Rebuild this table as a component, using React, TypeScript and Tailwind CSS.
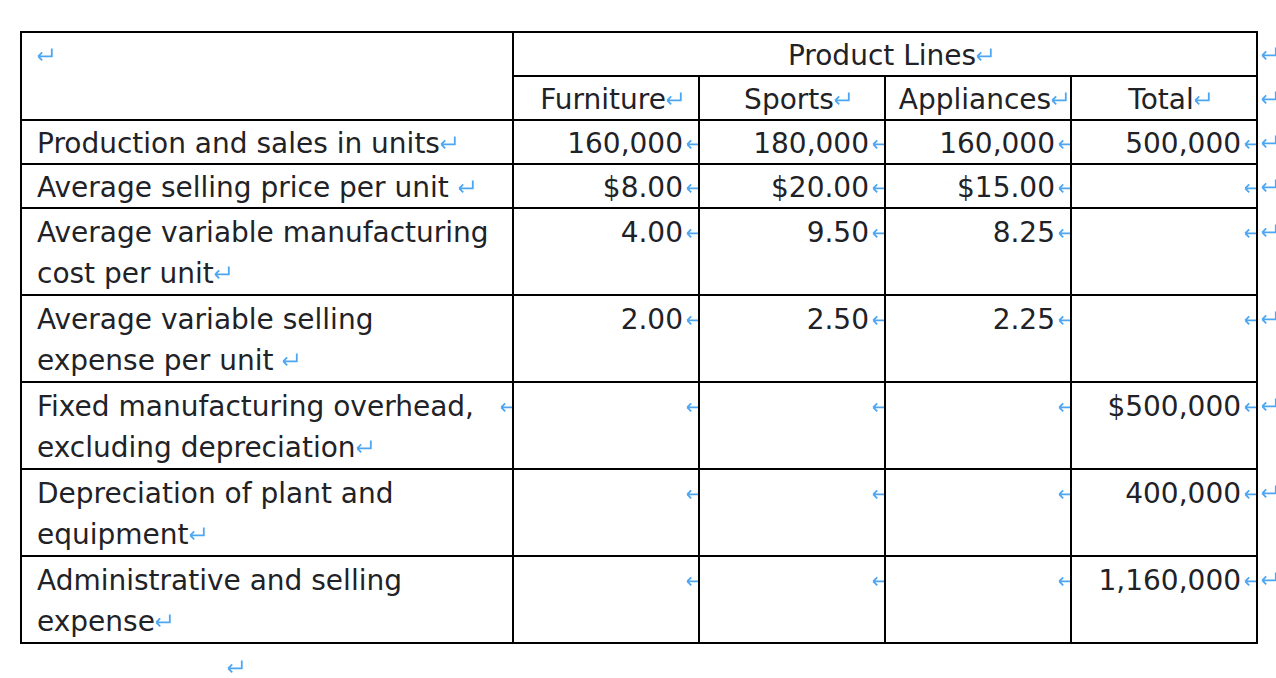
import type { ReactNode } from 'react';

// paragraph / end-of-cell marker as shown by a word processor
function Mark({ clip = false, className = '' }: { clip?: boolean; className?: string }) {
  const svg = (
    <svg width="16" height="20" viewBox="0 0 16 20" className="block" aria-hidden>
      <path
        d="M1.2 11.4 H14.8 V3.6 M1.2 11.4 L5.2 7.4 M1.2 11.4 L5.2 15.4"
        fill="none"
        stroke="#4ea6f2"
        strokeWidth="1.8"
      />
    </svg>
  );
  return (
    <span
      className={
        'inline-block align-baseline ' + (clip ? 'ml-[3px] w-[12px] overflow-hidden ' : '') + className
      }
    >
      {svg}
    </span>
  );
}

type Row = {
  label: ReactNode;
  cells: (string | null)[];
  total: string | null;
  single?: boolean;
};

const ROWS: Row[] = [
  {
    label: (
      <>
        Production and sales in units
        <Mark />
      </>
    ),
    cells: ['160,000', '180,000', '160,000'],
    total: '500,000',
    single: true,
  },
  {
    label: (
      <>
        Average selling price per unit <Mark />
      </>
    ),
    cells: ['$8.00', '$20.00', '$15.00'],
    total: null,
    single: true,
  },
  {
    label: (
      <>
        Average variable manufacturing
        <br />
        cost per unit
        <Mark />
      </>
    ),
    cells: ['4.00', '9.50', '8.25'],
    total: null,
  },
  {
    label: (
      <>
        Average variable selling
        <br />
        expense per unit <Mark />
      </>
    ),
    cells: ['2.00', '2.50', '2.25'],
    total: null,
  },
  {
    label: (
      <>
        Fixed manufacturing overhead, <Mark clip className="ml-[17px]" />
        <br />
        excluding depreciation
        <Mark />
      </>
    ),
    cells: [null, null, null],
    total: '$500,000',
  },
  {
    label: (
      <>
        Depreciation of plant and
        <br />
        equipment
        <Mark />
      </>
    ),
    cells: [null, null, null],
    total: '400,000',
  },
  {
    label: (
      <>
        Administrative and selling
        <br />
        expense
        <Mark />
      </>
    ),
    cells: [null, null, null],
    total: '1,160,000',
  },
];

const HEADERS = ['Furniture', 'Sports', 'Appliances', 'Total'];

const cell = 'border-2 border-black align-top p-0 pt-[4px] whitespace-nowrap';
const side = 'border-0 p-0 pt-[4px] pl-[3px] align-top';

export default function App() {
  return (
    <div className="h-[678px] bg-white pt-[31px] pl-[20px] font-['DejaVu_Sans',sans-serif] text-[28px] text-[#1f2226] overflow-hidden">
      <table className="table-fixed border-collapse w-[1256px]">
        <colgroup>
          <col className="w-[492px]" />
          <col className="w-[186px]" />
          <col className="w-[186px]" />
          <col className="w-[186px]" />
          <col className="w-[186px]" />
          <col className="w-[20px]" />
        </colgroup>
        <tbody>
          <tr className="leading-[38px]">
            <td rowSpan={2} className={cell + ' pl-[15px]'}>
              <Mark />
            </td>
            <td colSpan={4} className={cell + ' pl-[10px] text-center'}>
              Product Lines
              <Mark />
            </td>
            <td className={side}>
              <Mark />
            </td>
          </tr>
          <tr className="leading-[38px]">
            {HEADERS.map((h) => (
              <td key={h} className={cell + ' pl-[10px] text-center'}>
                {h}
                <Mark />
              </td>
            ))}
            <td className={side}>
              <Mark />
            </td>
          </tr>
          {ROWS.map((r, i) => (
            <tr key={i} className={r.single ? 'leading-[38px]' : 'leading-[40.5px]'}>
              <td className={cell + ' pl-[15px]'}>{r.label}</td>
              {r.cells.map((c, j) => (
                <td key={j} className={cell + ' text-right'}>
                  {c}
                  <Mark clip />
                </td>
              ))}
              <td className={cell + ' text-right'}>
                {r.total}
                <Mark clip />
              </td>
              <td className={side}>
                <Mark />
              </td>
            </tr>
          ))}
        </tbody>
      </table>
      <div className="pl-[207px] pt-[10px] leading-none">
        <Mark />
      </div>
    </div>
  );
}
